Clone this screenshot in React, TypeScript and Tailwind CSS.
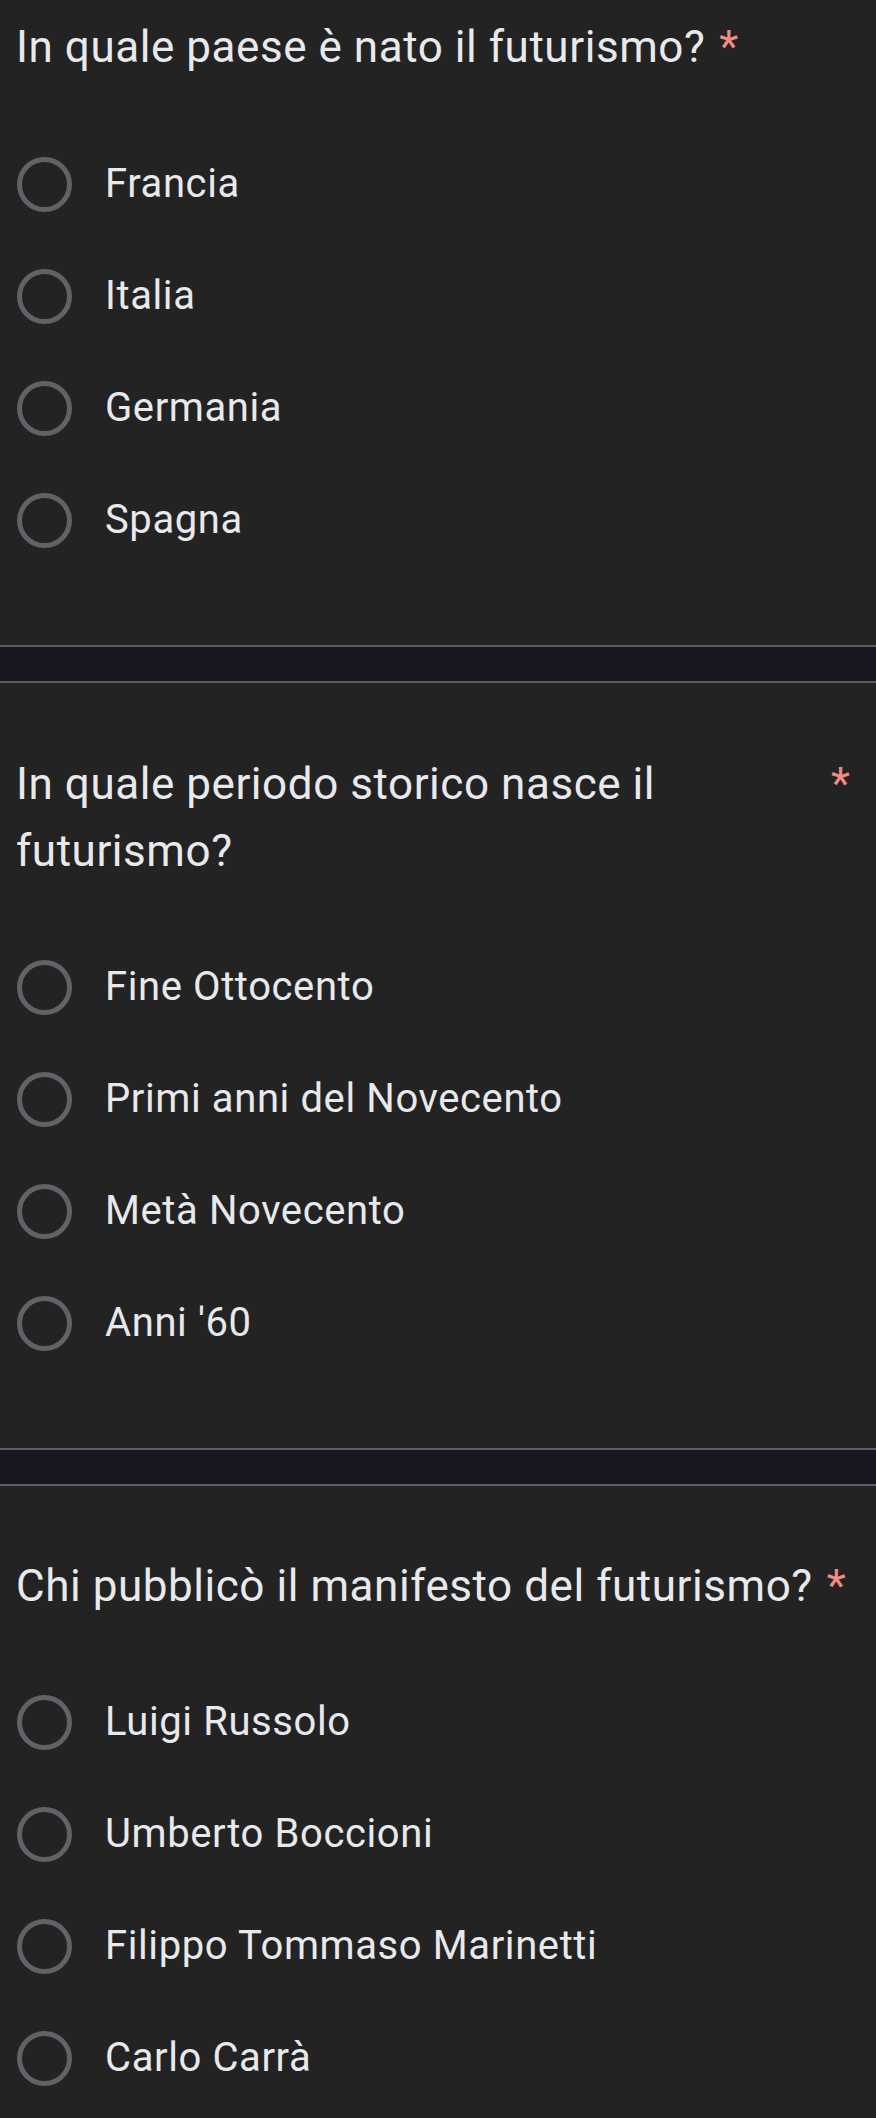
import React from "react";

type Q = { title: string; options: string[]; pt: string; mt: string; pb: string };

const questions: Q[] = [
  {
    title: "In quale paese è nato il futurismo?",
    options: ["Francia", "Italia", "Germania", "Spagna"],
    pt: "pt-[14px]",
    mt: "mt-[47px]",
    pb: "pb-[69px]",
  },
  {
    title: "In quale periodo storico nasce il futurismo?",
    options: ["Fine Ottocento", "Primi anni del Novecento", "Metà Novecento", "Anni '60"],
    pt: "pt-[68px]",
    mt: "mt-[46px]",
    pb: "pb-[69px]",
  },
  {
    title: "Chi pubblicò il manifesto del futurismo?",
    options: ["Luigi Russolo", "Umberto Boccioni", "Filippo Tommaso Marinetti", "Carlo Carrà"],
    pt: "pt-[67px]",
    mt: "mt-[46px]",
    pb: "pb-[4px]",
  },
];

function Separator() {
  return (
    <div className="flex flex-col">
      <div className="h-[2px] bg-[#5e5e62]" />
      <div className="h-[34px] bg-[#18161f]" />
      <div className="h-[2px] bg-[#5e5e62]" />
    </div>
  );
}

function Question({ q }: { q: Q }) {
  return (
    <section className={`${q.pt} ${q.pb}`}>
      <div className="flex items-start pl-[16px] pr-[26px]">
        <span className="min-w-0 text-[44px] leading-[67px] tracking-[0.55px] text-[#e8e9ec]">{q.title}</span>
        <span className="shrink-0 pl-[14px] text-[44px] leading-[67px] text-[#f28b82]">*</span>
      </div>
      <div className={`${q.mt} flex flex-col`}>
        {q.options.map((o) => (
          <div key={o} className="flex h-[112px] items-center pl-[17px]">
            <div className="h-[55px] w-[55px] shrink-0 rounded-full border-[5px] border-[#5f6368]" />
            <span className="ml-[33px] text-[40px] leading-[56px] tracking-[0.6px] text-[#e8e9ec]">{o}</span>
          </div>
        ))}
      </div>
    </section>
  );
}

export default function App() {
  return (
    <div
      className="min-h-screen w-full bg-[#232323]"
      style={{ fontFamily: "Roboto, 'Noto Sans', sans-serif" }}
    >
      {questions.map((q, i) => (
        <React.Fragment key={i}>
          {i > 0 && <Separator />}
          <Question q={q} />
        </React.Fragment>
      ))}
    </div>
  );
}
